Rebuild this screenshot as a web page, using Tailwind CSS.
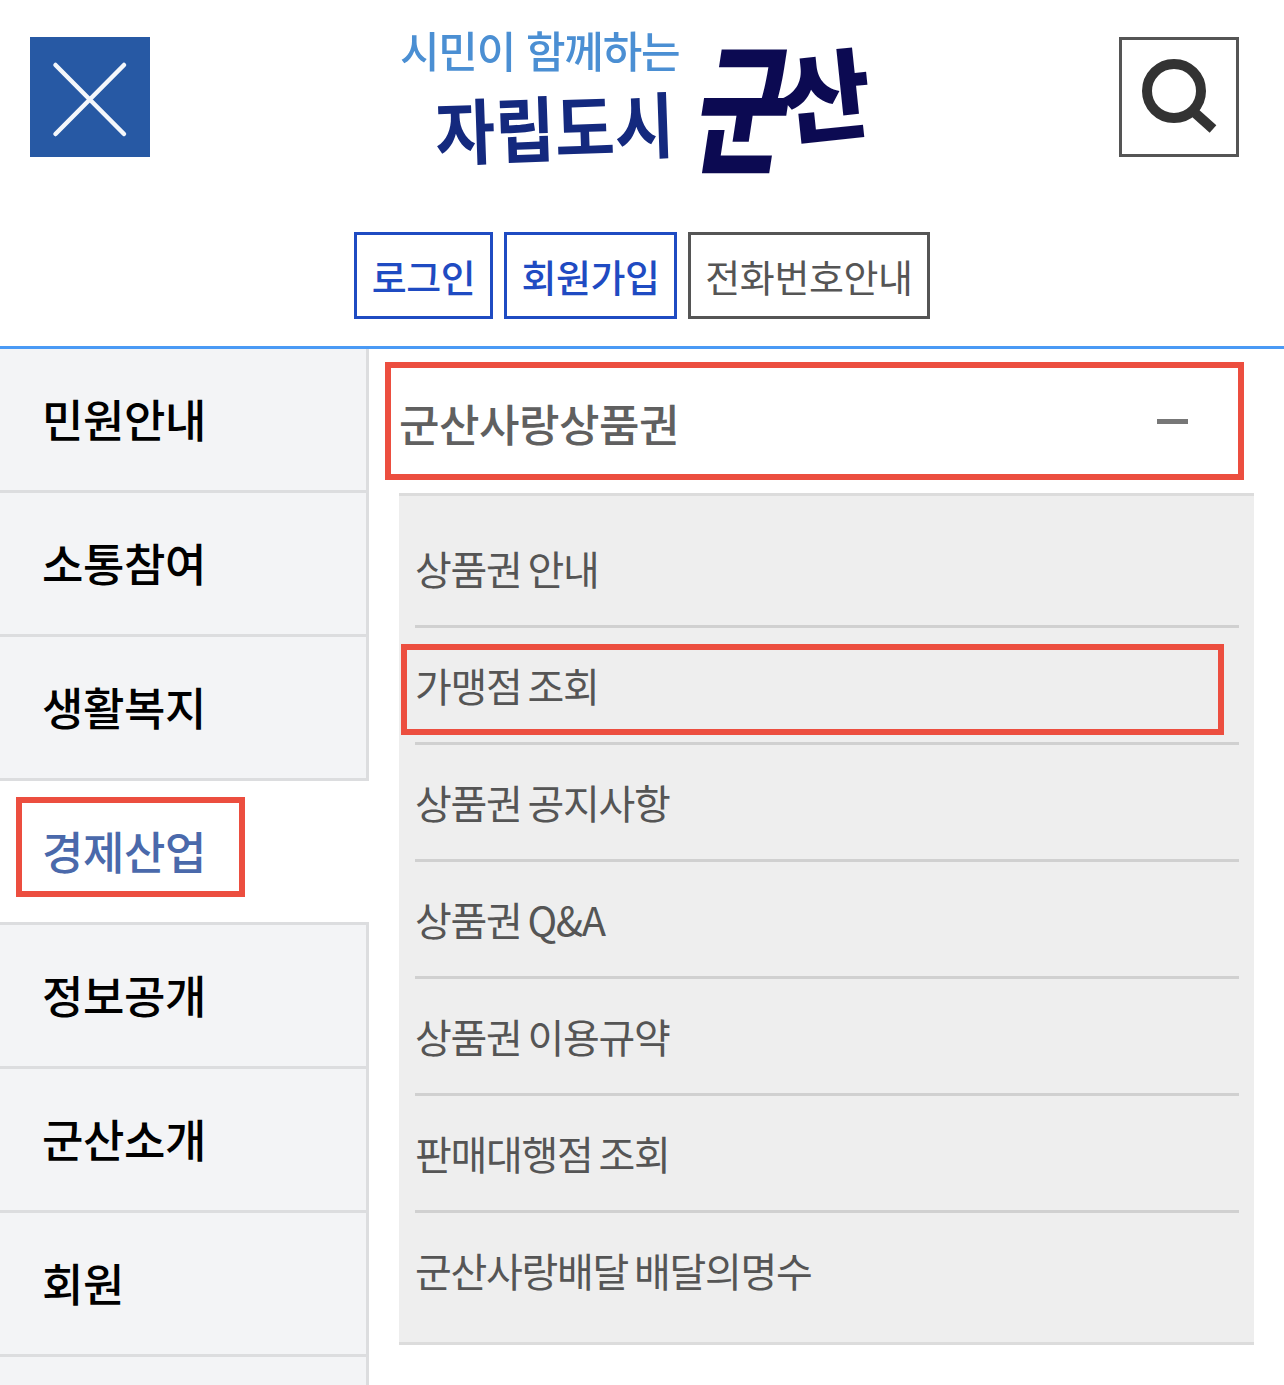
<!DOCTYPE html>
<html lang="ko">
<head>
<meta charset="utf-8">
<script src="https://cdn.jsdelivr.net/npm/@tailwindcss/browser@4"></script>
</head>
<body class="bg-white font-['Noto_Sans_CJK_KR',sans-serif] overflow-hidden">
<div class="w-[1284px] h-[1385px] overflow-hidden">
  <header class="h-[346px] relative">
    <div class="flex justify-between items-start pl-[30px] pr-[45px] pt-[37px]">
      <button class="w-[120px] h-[120px] bg-[#2759a4] flex items-center justify-center">
        <svg width="120" height="120" viewBox="0 0 120 120" fill="none" stroke="#f4f7fb" stroke-width="4.5" stroke-linecap="round"><path d="M25.5 28L94 97M94 28L25.5 97"/></svg>
      </button>
      <button class="w-[120px] h-[120px] border-[3px] border-[#555] flex items-center justify-center">
        <svg width="114" height="114" viewBox="0 0 114 114" fill="none" stroke="#333"><circle cx="52" cy="51" r="27" stroke-width="10"/><path d="M72 72L91 89" stroke-width="10"/></svg>
      </button>
    </div>
    <div class="absolute left-[400px] top-[20px] w-[480px] h-[165px] overflow-visible blur-[0.5px]">
      <span class="absolute left-0 top-[-6px] text-[43px] leading-[70px] tracking-[-1.2px] font-medium text-[#4b8fd3] whitespace-nowrap">시민이 함께하는</span>
      <span class="absolute left-[35px] top-[60px] text-[65px] leading-[90px] tracking-[0px] font-bold text-[#14297e] whitespace-nowrap scale-y-[1.1] -rotate-2">자립도시</span>
      <span class="absolute left-[300px] top-[22px] text-[100px] leading-[120px] font-black text-[#0c0a52] origin-center scale-y-[1.4] -skew-x-12">군</span>
      <span class="absolute left-[380px] top-[10px] text-[98px] leading-[120px] font-black text-[#0c0a52] -rotate-6">산</span>
    </div>
    <nav class="absolute left-[354px] top-[232px] flex gap-[11px] text-[38px] leading-[81px] tracking-[-0.4px]">
      <a class="h-[87px] w-[139px] border-[3px] border-[#1f4bc2] text-[#1f4bc2] text-center font-medium">로그인</a>
      <a class="h-[87px] w-[173px] border-[3px] border-[#1f4bc2] text-[#1f4bc2] text-center font-medium">회원가입</a>
      <a class="h-[87px] w-[242px] border-[3px] border-[#555] text-[#555] text-center">전화번호안내</a>
    </nav>
  </header>
  <main class="border-t-[3px] border-[#4a9af5] flex">
    <ul class="w-[369px] shrink-0 text-[45px] font-medium tracking-[-0.4px] text-black">
      <li class="h-[144px] bg-[#f3f4f6] border-r-[3px] border-b-[3px] border-[#dcdddf] pl-[42px] leading-[140px]">민원안내</li>
      <li class="h-[144px] bg-[#f3f4f6] border-r-[3px] border-b-[3px] border-[#dcdddf] pl-[42px] leading-[140px]">소통참여</li>
      <li class="h-[144px] bg-[#f3f4f6] border-r-[3px] border-b-[3px] border-[#dcdddf] pl-[42px] leading-[140px]">생활복지</li>
      <li class="h-[144px] bg-white border-b-[3px] border-[#dcdddf] pl-[42px] leading-[140px] text-[#4a69ab] relative">경제산업
        <span class="absolute left-[16px] top-[16px] w-[229px] h-[100px] border-[6px] border-[#ec4e3f]"></span>
      </li>
      <li class="h-[144px] bg-[#f3f4f6] border-r-[3px] border-b-[3px] border-[#dcdddf] pl-[42px] leading-[140px]">정보공개</li>
      <li class="h-[144px] bg-[#f3f4f6] border-r-[3px] border-b-[3px] border-[#dcdddf] pl-[42px] leading-[140px]">군산소개</li>
      <li class="h-[144px] bg-[#f3f4f6] border-r-[3px] border-b-[3px] border-[#dcdddf] pl-[42px] leading-[140px]">회원</li>
      <li class="h-[144px] bg-[#f3f4f6] border-r-[3px] border-[#dcdddf]"></li>
    </ul>
    <section class="flex-1 pl-[30px] pr-[30px]">
      <div class="relative h-[144px] flex items-center justify-between pr-[66px] text-[#606060] text-[44px] tracking-[-0.5px]">
        <span class="font-medium pt-[4px]">군산사랑상품권</span>
        <span class="w-[31px] h-[5px] bg-[#777]"></span>
        <span class="absolute left-[-14px] top-[13px] w-[859px] h-[118px] border-[6px] border-[#ec4e3f]"></span>
      </div>
      <ul class="bg-[#eeeeee] border-t-[3px] border-b-[3px] border-[#dcdcdc] pl-[15px] pr-[15px] text-[40px] tracking-[-1.3px] [word-spacing:-4px] text-[#555]">
        <li class="ml-[1px] h-[132px] pt-[42px] leading-[60px] border-b-[3px] border-[#d0d0d0]">상품권 안내</li>
        <li class="ml-[1px] h-[117px] pt-[27px] leading-[60px] border-b-[3px] border-[#d0d0d0] relative">가맹점 조회
          <span class="absolute left-[-14px] top-[16px] w-[823px] h-[91px] border-[6px] border-[#ec4e3f]"></span>
        </li>
        <li class="ml-[1px] h-[117px] pt-[27px] leading-[60px] border-b-[3px] border-[#d0d0d0]">상품권 공지사항</li>
        <li class="ml-[1px] h-[117px] pt-[27px] leading-[60px] border-b-[3px] border-[#d0d0d0]">상품권 Q&amp;A</li>
        <li class="ml-[1px] h-[117px] pt-[27px] leading-[60px] border-b-[3px] border-[#d0d0d0]">상품권 이용규약</li>
        <li class="ml-[1px] h-[117px] pt-[27px] leading-[60px] border-b-[3px] border-[#d0d0d0]">판매대행점 조회</li>
        <li class="ml-[1px] h-[129px] pt-[27px] leading-[60px]">군산사랑배달 배달의명수</li>
      </ul>
    </section>
  </main>
</div>
</body>
</html>
